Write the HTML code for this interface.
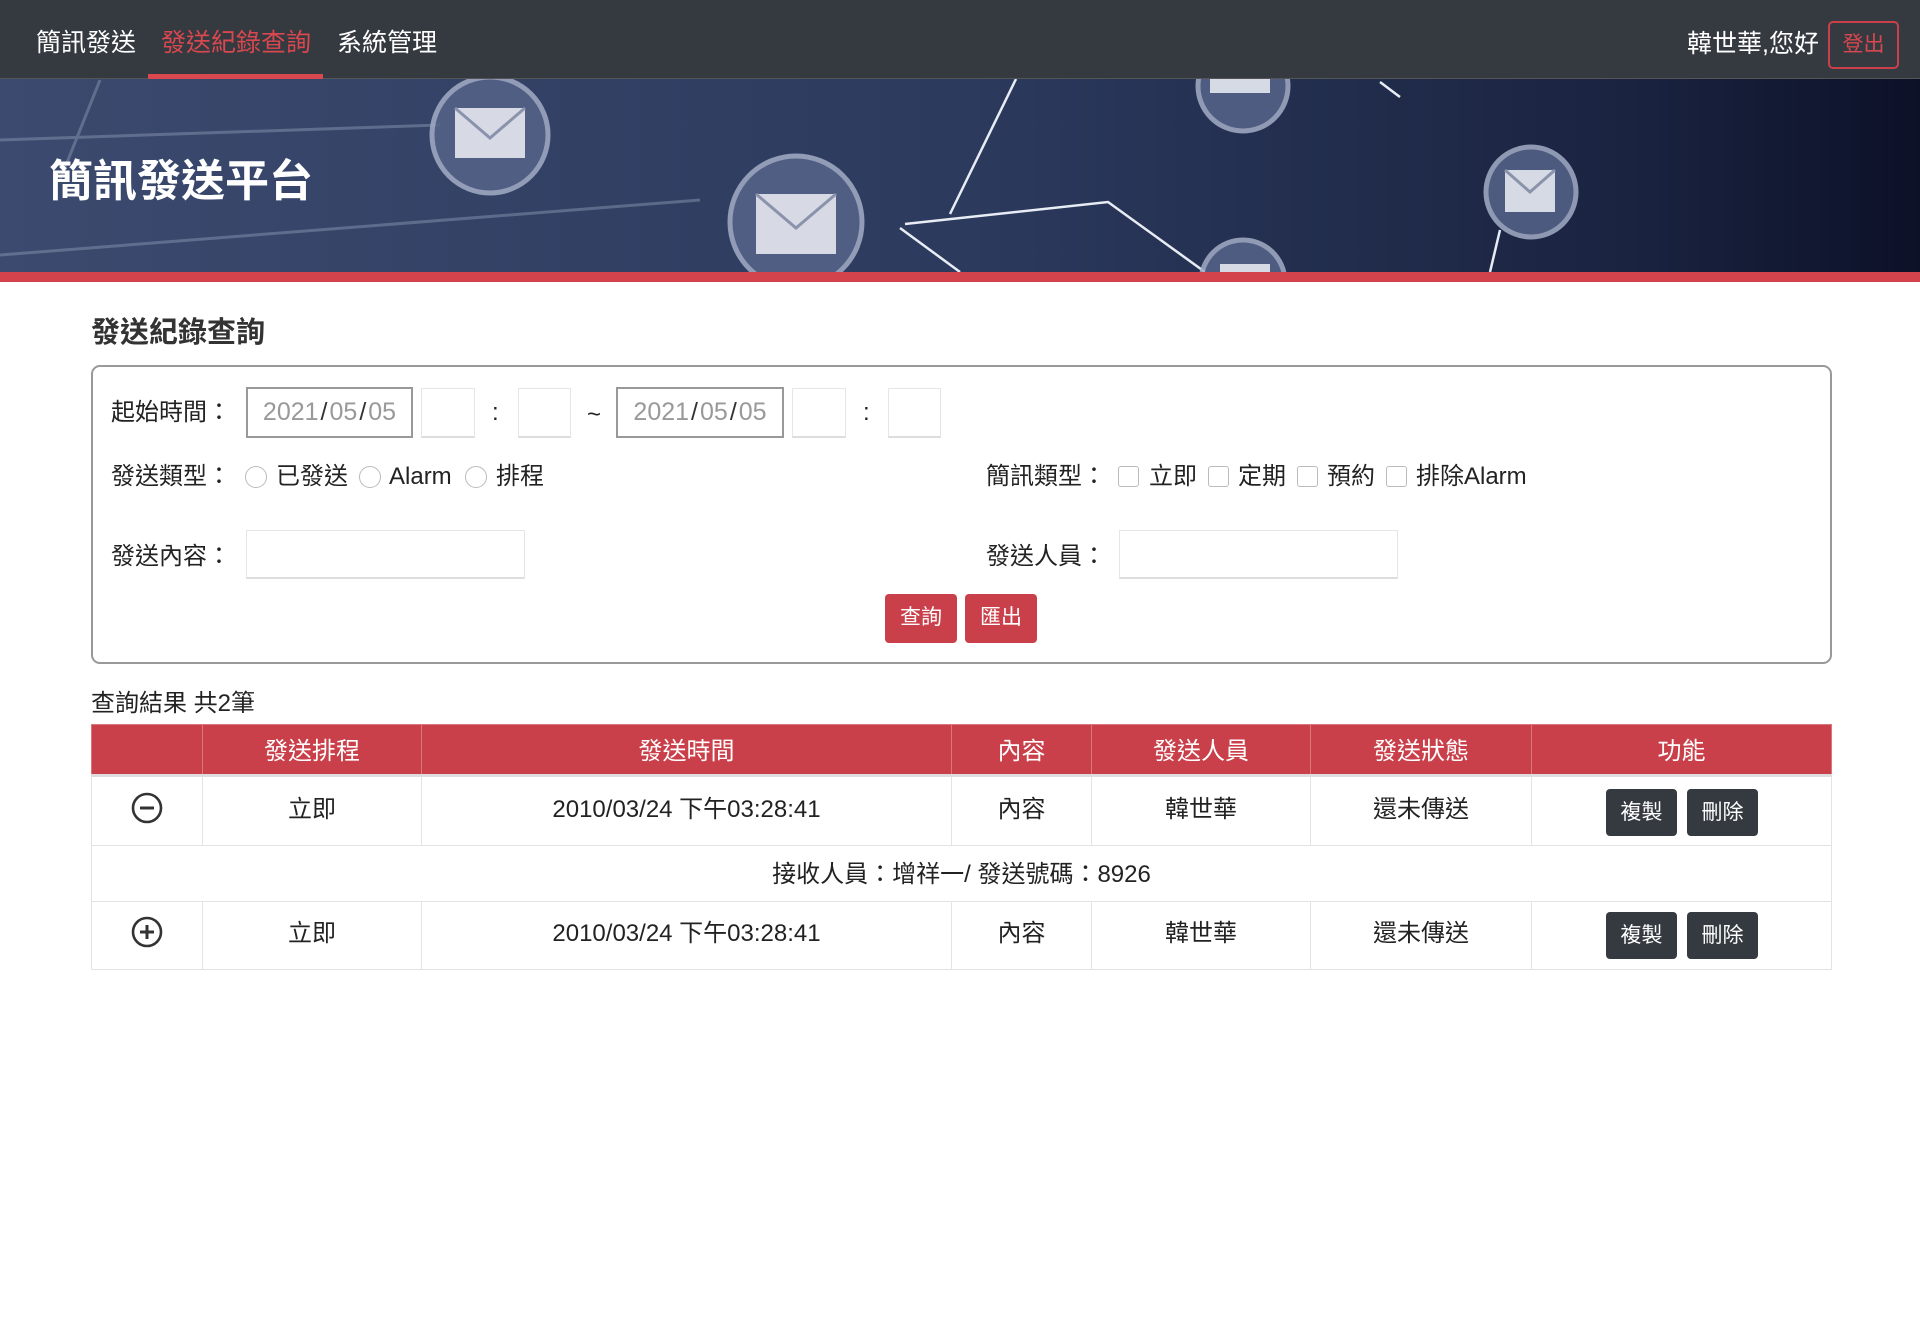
<!DOCTYPE html>
<html><head><meta charset="utf-8">
<style>
*{box-sizing:border-box;margin:0;padding:0}
body{width:1920px;height:1322px;background:#fff;font-family:"Liberation Sans","Noto Sans CJK TC",sans-serif;color:#222;position:relative;overflow:hidden}
.a{position:absolute}
.nav{left:0;top:0;width:1920px;height:79px;background:#343a40;border-bottom:1px solid #555}
.ni{top:27px;font-size:25px;color:#fff;line-height:32px}
.lbl{font-size:24px;color:#222;line-height:30px}
.inp{border:1px solid #e6e6e6;border-bottom:2px solid #ddd;background:#fff}
.dt{border:2px solid #999;font-size:25px;color:#999;line-height:46px;text-align:center}
.dt b{color:#333;font-weight:normal;padding:0 2px}
.rad{width:22px;height:22px;border:1px solid #bbb;border-radius:50%}
.chk{width:21px;height:21px;border:1px solid #bbb;border-radius:3px}
.btn{background:#c9404a;color:#fff;font-size:21px;text-align:center;border-radius:4px;line-height:48px}
.dbtn{background:#343a40;color:#fff;font-size:21px;text-align:center;border-radius:4px;line-height:47px;width:71px;height:47px;top:0}
table{border-collapse:collapse;font-size:24px}
td,th{border:1px solid #e3e3e3;text-align:center}
td{padding-bottom:10px}
th{background:#c9404a;color:#fff;font-weight:normal;height:51px;border-color:#d9777d;border-bottom:3px solid #ddd;padding-bottom:3px}
</style></head><body>
<div class="a nav"></div>
<div class="a ni" style="left:36px">簡訊發送</div>
<div class="a ni" style="left:161px;color:#d9474f">發送紀錄查詢</div>
<div class="a" style="left:148px;top:74px;width:175px;height:5px;background:#d9474f"></div>
<div class="a ni" style="left:337px">系統管理</div>
<div class="a ni" style="left:1687px;top:28px">韓世華,您好</div>
<div class="a" style="left:1828px;top:21px;width:71px;height:48px;border:2px solid #c9404a;border-radius:5px;color:#d9474f;font-size:21px;text-align:center;line-height:44px">登出</div>

<svg class="a" style="left:0;top:79px" width="1920" height="193" viewBox="0 79 1920 193">
<defs><linearGradient id="g" x1="0" x2="1" y1="0" y2="0"><stop offset="0" stop-color="#3b4a6e"/><stop offset=".5" stop-color="#2c3a5e"/><stop offset=".85" stop-color="#1a2340"/><stop offset="1" stop-color="#0c1128"/></linearGradient></defs>
<rect x="0" y="79" width="1920" height="193" fill="url(#g)"/>
<g stroke="#8893b0" stroke-width="3" opacity=".5" fill="none"><line x1="0" y1="140" x2="440" y2="125"/><line x1="0" y1="255" x2="700" y2="200"/><line x1="60" y1="180" x2="100" y2="80"/></g>
<g stroke="#e8ecf5" stroke-width="2.5" fill="none"><line x1="1016" y1="79" x2="950" y2="214"/><polyline points="905,224 1108,202 1205,272"/><line x1="900" y1="228" x2="960" y2="272"/><line x1="1500" y1="230" x2="1490" y2="272"/><line x1="1380" y1="82" x2="1400" y2="97"/></g>
<g fill="#56648a" stroke="#a4adc6" stroke-width="5" opacity=".85">
<circle cx="490" cy="135" r="58"/><circle cx="796" cy="222" r="66"/><circle cx="1243" cy="86" r="45"/><circle cx="1531" cy="192" r="45"/><circle cx="1243" cy="282" r="42"/></g>
<g fill="#e6e8ef" opacity=".9"><rect x="455" y="108" width="70" height="50"/><rect x="756" y="194" width="80" height="60"/><rect x="1210" y="79" width="60" height="14"/><rect x="1505" y="170" width="50" height="42"/><rect x="1220" y="264" width="50" height="10"/></g>
<g stroke="#8a93ab" stroke-width="3" fill="none"><polyline points="455,108 490,138 525,108"/><polyline points="756,194 796,228 836,194"/><polyline points="1505,170 1530,192 1555,170"/></g>
<text x="49" y="196" font-size="44" font-weight="bold" fill="#fff" font-family="Liberation Sans,Noto Sans CJK TC,sans-serif">簡訊發送平台</text>
</svg>
<div class="a" style="left:0;top:272px;width:1920px;height:10px;background:#d2434b"></div>

<div class="a" style="left:91px;top:309px;font-size:29px;font-weight:bold;color:#333">發送紀錄查詢</div>
<div class="a" style="left:91px;top:365px;width:1741px;height:299px;border:2px solid #999;border-radius:9px"></div>

<div class="a lbl" style="left:111px;top:398px">起始時間：</div>
<div class="a dt" style="left:246px;top:387px;width:167px;height:51px">2021<b>/</b>05<b>/</b>05</div>
<div class="a inp" style="left:421px;top:388px;width:54px;height:50px"></div>
<div class="a lbl" style="left:492px;top:398px">:</div>
<div class="a inp" style="left:518px;top:388px;width:53px;height:50px"></div>
<div class="a lbl" style="left:587px;top:400px">~</div>
<div class="a dt" style="left:616px;top:387px;width:168px;height:51px">2021<b>/</b>05<b>/</b>05</div>
<div class="a inp" style="left:792px;top:388px;width:54px;height:50px"></div>
<div class="a lbl" style="left:863px;top:398px">:</div>
<div class="a inp" style="left:888px;top:388px;width:53px;height:50px"></div>

<div class="a lbl" style="left:111px;top:462px">發送類型：</div>
<div class="a rad" style="left:245px;top:466px"></div><div class="a lbl" style="left:276px;top:462px">已發送</div>
<div class="a rad" style="left:359px;top:466px"></div><div class="a lbl" style="left:389px;top:462px">Alarm</div>
<div class="a rad" style="left:465px;top:466px"></div><div class="a lbl" style="left:496px;top:462px">排程</div>

<div class="a lbl" style="left:986px;top:462px">簡訊類型：</div>
<div class="a chk" style="left:1118px;top:466px"></div><div class="a lbl" style="left:1149px;top:462px">立即</div>
<div class="a chk" style="left:1208px;top:466px"></div><div class="a lbl" style="left:1238px;top:462px">定期</div>
<div class="a chk" style="left:1297px;top:466px"></div><div class="a lbl" style="left:1327px;top:462px">預約</div>
<div class="a chk" style="left:1386px;top:466px"></div><div class="a lbl" style="left:1416px;top:462px">排除Alarm</div>

<div class="a lbl" style="left:111px;top:542px">發送內容：</div>
<div class="a inp" style="left:246px;top:530px;width:279px;height:49px"></div>
<div class="a lbl" style="left:986px;top:542px">發送人員：</div>
<div class="a inp" style="left:1119px;top:530px;width:279px;height:49px"></div>

<div class="a btn" style="left:885px;top:594px;width:72px;height:49px">查詢</div>
<div class="a btn" style="left:965px;top:594px;width:72px;height:49px">匯出</div>

<div class="a lbl" style="left:91px;top:689px">查詢結果 共2筆</div>

<table class="a" style="left:91px;top:724px;width:1741px">
<tr><th style="width:111px"></th><th style="width:219px">發送排程</th><th style="width:530px">發送時間</th><th style="width:140px">內容</th><th style="width:219px">發送人員</th><th style="width:221px">發送狀態</th><th>功能</th></tr>
<tr style="height:70px"><td style="padding-bottom:0"><svg width="32" height="32" viewBox="0 0 32 32"><circle cx="16" cy="16" r="14" fill="none" stroke="#333" stroke-width="2.6"/><rect x="9" y="14.5" width="14" height="3" fill="#333"/></svg></td><td>立即</td><td>2010/03/24 下午03:28:41</td><td>內容</td><td>韓世華</td><td>還未傳送</td><td style="position:relative"><div class="a dbtn" style="left:74px;top:12px">複製</div><div class="a dbtn" style="left:155px;top:12px">刪除</div></td></tr>
<tr style="height:56px"><td colspan="7" style="padding-bottom:4px">接收人員：增祥一/ 發送號碼：8926</td></tr>
<tr style="height:68px"><td style="padding-bottom:0"><svg width="32" height="32" viewBox="0 0 32 32"><circle cx="16" cy="16" r="14" fill="none" stroke="#333" stroke-width="2.6"/><rect x="9" y="14.5" width="14" height="3" fill="#333"/><rect x="14.5" y="9" width="3" height="14" fill="#333"/></svg></td><td>立即</td><td>2010/03/24 下午03:28:41</td><td>內容</td><td>韓世華</td><td>還未傳送</td><td style="position:relative"><div class="a dbtn" style="left:74px;top:10px">複製</div><div class="a dbtn" style="left:155px;top:10px">刪除</div></td></tr>
</table>
</body></html>
